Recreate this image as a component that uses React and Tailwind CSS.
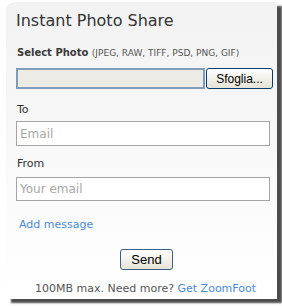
import React from 'react';

export default function App() {
  return (
    <div className="w-[282px] h-[306px] bg-white overflow-hidden font-['DejaVu_Sans',sans-serif]">
      <div className="ml-[6px] mt-[2px] w-[271px] h-[297px] rounded-tl-[9px] bg-gradient-to-b from-[#f2f2f2] to-[#ffffff] shadow-[5px_4px_2px_rgba(0,0,0,0.7)] pl-[10px] pt-[9px] flex flex-col">
        {/* Titolo */}
        <h1 className="text-[16px] leading-[19px] text-[#333]">Instant Photo Share</h1>

        {/* Selezione foto */}
        <div className="mt-[16px] text-[11px] leading-[13px] text-[#333] pl-[1px]">
          <span className="font-bold text-[10px] text-[#3a3a3a]">Select Photo</span>{' '}
          <span className="text-[9px] text-[#555]">(JPEG, RAW, TIFF, PSD, PNG, GIF)</span>
        </div>
        <div className="mt-[8px] flex items-stretch h-[21px]">
          <div className="w-[189px] border-2 border-[#7f9db9] bg-[#ecebe5]" />
          <button className="ml-[1px] w-[67px] border border-[#003c74] rounded-[3px] bg-gradient-to-b from-[#ffffff] to-[#e6e3d6] text-[12px] text-black font-['Liberation_Sans',sans-serif]">
            Sfoglia...
          </button>
        </div>

        {/* Destinatario */}
        <label className="mt-[14px] text-[11px] leading-[13px] text-[#333] pl-[1px]">To</label>
        <div className="mt-[5px] w-[254px] h-[25px] border border-[#a5a5a5] bg-white flex items-center pl-[3px] text-[12px] text-[#a8a8a8]">
          Email
        </div>

        {/* Mittente */}
        <label className="mt-[11px] text-[11px] leading-[13px] text-[#333] pl-[1px]">From</label>
        <div className="mt-[7px] w-[254px] h-[24px] border border-[#a5a5a5] bg-white flex items-center pl-[3px] text-[12px] text-[#a8a8a8]">
          Your email
        </div>

        <a className="mt-[16px] ml-[3px] text-[11px] leading-[15px] text-[#4a8ad8]">Add message</a>

        <div className="mt-[17px] flex justify-center">
          <button className="w-[53px] h-[21px] border border-[#3d5f86] rounded-[3px] bg-gradient-to-b from-[#ffffff] to-[#e6e3d6] text-[13px] text-black font-['Liberation_Sans',sans-serif]">
            Send
          </button>
        </div>

        <p className="mt-[12px] text-center pr-[2px] text-[11px] leading-[13px] text-[#555]">
          100MB max. Need more? <span className="text-[#4a8ad8]">Get ZoomFoot</span>
        </p>
      </div>
    </div>
  );
}
